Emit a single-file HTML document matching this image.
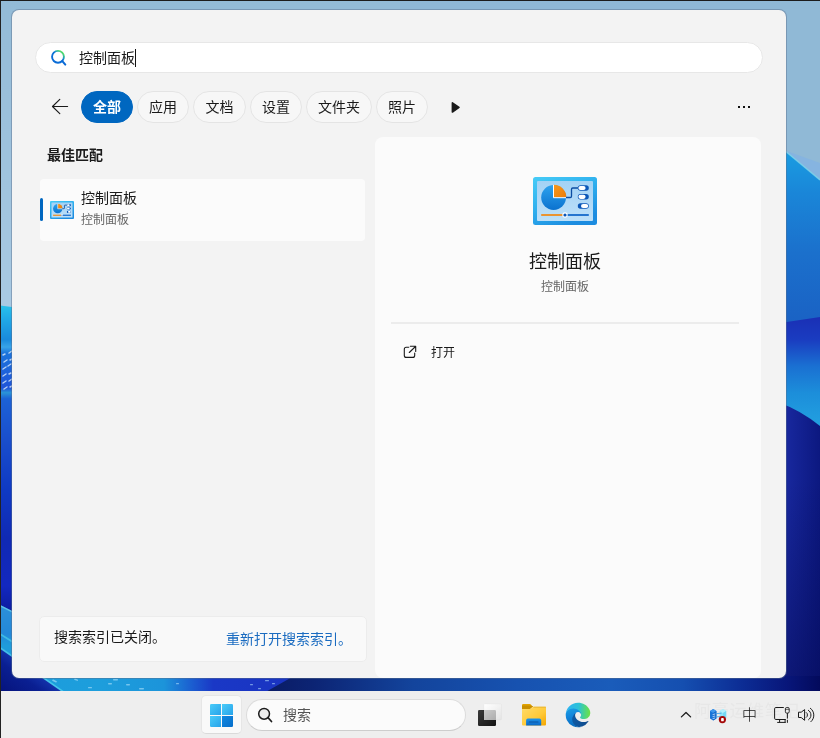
<!DOCTYPE html>
<html lang="zh-CN">
<head>
<meta charset="utf-8">
<title>搜索</title>
<style>
html,body{margin:0;padding:0;}
body{width:820px;height:738px;overflow:hidden;position:relative;background:#93bbd7;font-family:"Liberation Sans","Noto Sans CJK SC",sans-serif;color:#1a1a1a;}
.abs{position:absolute;}
#wall{position:absolute;left:0;top:0;width:820px;height:738px;filter:blur(0.5px);}
#panel{position:absolute;left:12px;top:10px;width:774px;height:668px;background:#f3f3f3;border-radius:7px;box-shadow:0 0 0 1px rgba(90,110,140,.45);}
#sbox{position:absolute;left:35px;top:42px;width:728px;height:31px;background:#fff;border:1px solid #e7e7e7;border-radius:16px;box-sizing:border-box;}
.t{position:absolute;white-space:nowrap;line-height:1;}
.chip{position:absolute;top:91px;height:32px;box-sizing:border-box;border:1px solid #e4e4e4;background:#f7f7f7;border-radius:16px;font-size:14px;line-height:30px;text-align:center;color:#1a1a1a;}
.chip.on{background:#0067c0;border-color:#0067c0;color:#fff;font-weight:bold;}
#item{position:absolute;left:40px;top:179px;width:325px;height:62px;background:#fbfbfb;border-radius:4px;}
#rpane{position:absolute;left:375px;top:137px;width:386px;height:541px;background:#fbfbfb;border-radius:8px 8px 7px 8px;}
#notice{position:absolute;left:39px;top:616px;width:328px;height:46px;box-sizing:border-box;background:#f9f9f9;border:1px solid #ececec;border-radius:5px;}
#taskbar{position:absolute;left:1px;top:691px;width:819px;height:47px;background:#eeeeee;}
#startbg{position:absolute;left:201px;top:695px;width:41px;height:39px;box-sizing:border-box;background:#f9f9f9;border:1px solid #e6e6e6;border-bottom-color:#dadada;border-radius:5px;}
#tsearch{position:absolute;left:246px;top:699px;width:220px;height:32px;box-sizing:border-box;background:#fbfbfb;border:1px solid #dcdcdc;border-bottom-color:#cdcdcd;border-radius:16px;}
</style>
</head>
<body>
<svg id="wall" width="820" height="738" viewBox="0 0 820 738">
<defs>
<linearGradient id="gL1" x1="0" y1="0" x2="0" y2="1"><stop offset="0" stop-color="#93bbd7"/><stop offset="1" stop-color="#a9cae3"/></linearGradient>
<linearGradient id="gL2" gradientUnits="userSpaceOnUse" x1="0" y1="306" x2="0" y2="610"><stop offset="0" stop-color="#28c0ea"/><stop offset="0.045" stop-color="#20a8e6"/><stop offset="0.11" stop-color="#1a8adc"/><stop offset="0.135" stop-color="#38a4e8"/><stop offset="0.155" stop-color="#1c74dc"/><stop offset="0.27" stop-color="#2054d8"/><stop offset="0.285" stop-color="#2a94d8"/><stop offset="0.305" stop-color="#1c62d6"/><stop offset="0.44" stop-color="#1a4ecc"/><stop offset="0.6" stop-color="#0f3ac4"/><stop offset="0.77" stop-color="#1029b4"/><stop offset="0.92" stop-color="#1328c0"/><stop offset="1" stop-color="#0d1ea0"/></linearGradient>
<linearGradient id="gL3" gradientUnits="userSpaceOnUse" x1="0" y1="606" x2="0" y2="700"><stop offset="0" stop-color="#2c90da"/><stop offset="0.3" stop-color="#2388d8"/><stop offset="0.42" stop-color="#1f9cda"/><stop offset="1" stop-color="#1c9cdc"/></linearGradient>
<linearGradient id="gN" gradientUnits="userSpaceOnUse" x1="0" y1="694" x2="26" y2="658"><stop offset="0" stop-color="#05127a"/><stop offset="0.6" stop-color="#0a1f92"/><stop offset="1" stop-color="#183cb8"/></linearGradient>
<linearGradient id="gB" gradientUnits="userSpaceOnUse" x1="0" y1="0" x2="820" y2="0">
<stop offset="0" stop-color="#1c9cdc"/><stop offset="0.12" stop-color="#1d9edc"/><stop offset="0.2" stop-color="#1c94da"/><stop offset="0.235" stop-color="#1b5cd0"/><stop offset="0.26" stop-color="#1a38c6"/><stop offset="0.35" stop-color="#1a34c2"/></linearGradient>
<linearGradient id="gB2" gradientUnits="userSpaceOnUse" x1="270" y1="0" x2="820" y2="0">
<stop offset="0" stop-color="#0a1c66"/><stop offset="0.08" stop-color="#0c2474"/><stop offset="0.26" stop-color="#13449c"/><stop offset="0.45" stop-color="#1752b0"/><stop offset="0.62" stop-color="#1a5cba"/><stop offset="0.75" stop-color="#154fb0"/><stop offset="0.86" stop-color="#0c2c94"/><stop offset="0.94" stop-color="#08167a"/><stop offset="1" stop-color="#030a5c"/></linearGradient>
<linearGradient id="gR1" gradientUnits="userSpaceOnUse" x1="0" y1="150" x2="0" y2="322"><stop offset="0" stop-color="#1a9ee2"/><stop offset="0.25" stop-color="#1a86d8"/><stop offset="0.6" stop-color="#1b70cc"/><stop offset="1" stop-color="#1a62c4"/></linearGradient>
<linearGradient id="gR2" gradientUnits="userSpaceOnUse" x1="0" y1="318" x2="0" y2="425"><stop offset="0" stop-color="#1a30b6"/><stop offset="0.2" stop-color="#1a3cc0"/><stop offset="0.45" stop-color="#1a70d2"/><stop offset="0.7" stop-color="#1c8eda"/><stop offset="1" stop-color="#22a0e0"/></linearGradient>
<linearGradient id="gR3" gradientUnits="userSpaceOnUse" x1="786" y1="0" x2="822" y2="0"><stop offset="0" stop-color="#18289e"/><stop offset="1" stop-color="#0b177e"/></linearGradient>
<linearGradient id="gR4" gradientUnits="userSpaceOnUse" x1="0" y1="480" x2="0" y2="692"><stop offset="0" stop-color="#02064a" stop-opacity="0"/><stop offset="1" stop-color="#02064a" stop-opacity="0.5"/></linearGradient>
</defs>
<rect x="0" y="0" width="820" height="738" fill="#93bbd7"/>
<rect x="400" y="0" width="420" height="160" fill="#8fb8d6"/>
<!-- left strip -->
<rect x="0" y="0" width="16" height="310" fill="url(#gL1)"/>
<polygon points="0,305.5 16,307.5 16,616 0,606" fill="url(#gL2)"/>
<g stroke="#e4f2ff" stroke-width="1.5" stroke-linecap="round" opacity="0.75">
<path d="M3 355l2-1M9 353l3-2M4 362l3-2M10 360l2-1M3 369l3-2M8 366l3-2M3 376l3-2M9 374l2-1M3 383l3-2M9 381l3-2M4 389l3-2M10 387l2-1"/>
</g>
<polygon points="0,605 16,613 16,700 0,700" fill="url(#gL3)"/>
<path d="M0 605.6L16 613.6" stroke="#62cbea" stroke-width="1.5" opacity="0.85"/>
<path d="M0 634L16 644" stroke="#45c6e6" stroke-width="1.8" opacity="0.8"/>
<!-- bottom strip -->
<rect x="10" y="672" width="292" height="20" fill="url(#gB)"/>
<polygon points="0,647 66,694 0,694" fill="url(#gN)"/>
<path d="M0 647.8L66 693.6" stroke="#48cdee" stroke-width="1.7" opacity="0.9"/>
<g fill="#bfeaff" opacity="0.55">
<rect x="52" y="680" width="5" height="1.6" rx="0.8" transform="rotate(25 54 681)"/>
<rect x="74" y="679" width="4" height="1.4" rx="0.7" transform="rotate(20 76 680)"/>
<rect x="108" y="683" width="4" height="1.5" rx="0.7"/>
<rect x="113" y="679" width="5" height="1.5" rx="0.7"/>
<rect x="126" y="684" width="4" height="1.4" rx="0.7"/>
<rect x="139" y="688" width="5" height="1.4" rx="0.7"/>
<rect x="88" y="687" width="4" height="1.3" rx="0.6"/>
<rect x="176" y="683" width="3" height="1.3" rx="0.6"/>
<rect x="250" y="684" width="3" height="1.3" rx="0.6"/>
<rect x="258" y="688" width="3" height="1.3" rx="0.6"/>
<rect x="265" y="680" width="4" height="1.3" rx="0.6"/>
<rect x="272" y="683" width="3" height="1.3" rx="0.6"/>
</g>
<!-- right strip -->
<rect x="780" y="150" width="40" height="175" fill="url(#gR1)"/>
<polygon points="780,0 820,0 820,179 784,150 780,150" fill="#90b9d6"/>
<polygon points="784,150 820,163 820,180" fill="#86b4e0"/>
<path d="M784 150L820 180" stroke="#7fd6ea" stroke-width="1.5" opacity="0.8"/>
<polygon points="780,323 820,317 820,430 780,404" fill="url(#gR2)"/>
<path d="M780 403 Q800 410 820 426 L820 700 L780 700Z" fill="url(#gR3)"/>
<rect x="780" y="480" width="40" height="220" fill="url(#gR4)"/>
<polygon points="294,676 262,694 820,694 820,676" fill="url(#gB2)"/>


</svg>
<div id="panel"></div>
<div id="ui" style="position:absolute;left:0;top:0;width:820px;height:738px;will-change:transform;">
<div id="sbox"></div>
<svg class="abs" style="left:48px;top:46px;" width="22" height="22" viewBox="48 46 22 22">
<defs><linearGradient id="sg" gradientUnits="userSpaceOnUse" x1="53" y1="63" x2="64" y2="50"><stop offset="0" stop-color="#0a6ad6"/><stop offset="0.5" stop-color="#0a70d8"/><stop offset="0.66" stop-color="#28aab4"/><stop offset="0.8" stop-color="#50da6c"/><stop offset="1" stop-color="#5fe060"/></linearGradient></defs>
<circle cx="58" cy="56.8" r="5.95" fill="none" stroke="url(#sg)" stroke-width="1.9"/>
<path d="M62.3 61.1L65.3 64.6" stroke="#0a6ad6" stroke-width="2" stroke-linecap="round"/>
</svg>
<div class="t" style="left:79px;top:51px;font-size:14px;">控制面板</div>
<div class="abs" style="left:135px;top:49px;width:1px;height:18px;background:#111;"></div>

<svg class="abs" style="left:48px;top:95px;" width="24" height="24" viewBox="48 95 24 24">
<path d="M67.6 106.5H52.6M59.8 99.3L52.5 106.5L59.8 113.7" fill="none" stroke="#1a1a1a" stroke-width="1.15" stroke-linecap="round" stroke-linejoin="round"/>
</svg>
<div class="chip on" style="left:81px;width:52px;">全部</div>
<div class="chip" style="left:137px;width:52px;">应用</div>
<div class="chip" style="left:193px;width:53px;">文档</div>
<div class="chip" style="left:250px;width:52px;">设置</div>
<div class="chip" style="left:306px;width:66px;">文件夹</div>
<div class="chip" style="left:376px;width:52px;">照片</div>
<svg class="abs" style="left:446px;top:97px;" width="20" height="20" viewBox="446 97 20 20">
<path d="M452.4 102.9L459 107.4L452.4 112Z" fill="#1a1a1a" stroke="#1a1a1a" stroke-width="1.6" stroke-linejoin="round"/>
</svg>
<svg class="abs" style="left:734px;top:102px;" width="20" height="10" viewBox="734 102 20 10">
<rect x="738" y="106" width="2" height="2" fill="#111"/><rect x="743" y="106" width="2" height="2" fill="#111"/><rect x="748" y="106" width="2" height="2" fill="#111"/>
</svg>

<div class="t" style="left:47px;top:148px;font-size:14px;font-weight:bold;">最佳匹配</div>
<div id="item"></div>
<div class="abs" style="left:40px;top:198px;width:3px;height:23px;background:#0067c0;border-radius:2px;"></div>
<svg class="abs" style="left:50px;top:201px;" width="24" height="18" viewBox="0 0 64 48">
<defs>
<linearGradient id="af" x1="0" y1="0" x2="0.6" y2="1"><stop offset="0" stop-color="#46ccf7"/><stop offset="0.5" stop-color="#2fb0ee"/><stop offset="1" stop-color="#1c8ce0"/></linearGradient>
<linearGradient id="ai" x1="0" y1="0" x2="0" y2="1"><stop offset="0" stop-color="#a3d2f5"/><stop offset="1" stop-color="#bde0f9"/></linearGradient>
<linearGradient id="ap" x1="0" y1="0" x2="0" y2="1"><stop offset="0" stop-color="#2da2ee"/><stop offset="1" stop-color="#0b72cf"/></linearGradient>
<linearGradient id="ao" x1="0" y1="0" x2="1" y2="1"><stop offset="0" stop-color="#f8981d"/><stop offset="1" stop-color="#ea7c08"/></linearGradient>
</defs>
<rect x="0" y="0" width="64" height="48" rx="2.5" fill="url(#af)"/>
<rect x="4" y="4" width="56" height="40" rx="1" fill="url(#ai)"/>
<circle cx="20.6" cy="20.5" r="12.4" fill="url(#ap)"/>
<path d="M20.9 20.2V7.8A12.4 12.4 0 0 1 33.3 20.2Z" fill="url(#ao)"/>
<path d="M20.5 7.9V20.7H33.2" fill="none" stroke="#fff" stroke-width="1.6"/>
<path d="M33 20.5H37.2Q38.5 20.5 38.5 19.2V12.3Q38.5 11 39.8 11H45" fill="none" stroke="#0c4da2" stroke-width="2.2"/>
<rect x="44.8" y="8.3" width="11" height="5.4" rx="2.7" fill="#0b57b8"/><rect x="45.4" y="8.9" width="7.2" height="4.2" rx="2.1" fill="#fff"/>
<rect x="44.8" y="17.1" width="11" height="5.4" rx="2.7" fill="#0b57b8"/><rect x="45.4" y="17.7" width="7.2" height="4.2" rx="2.1" fill="#fff"/>
<rect x="44.8" y="26.3" width="11" height="5.4" rx="2.7" fill="#0b57b8"/><rect x="48" y="26.9" width="7.2" height="4.2" rx="2.1" fill="#fff"/>
<path d="M8.2 38H30" stroke="#f2870f" stroke-width="3"/>
<path d="M34 38H55.8" stroke="#0b63c8" stroke-width="3"/>
<circle cx="32" cy="38" r="2.7" fill="#fff"/><circle cx="32" cy="38" r="1.6" fill="#0b57b8"/>
</svg>
<div class="t" style="left:81px;top:191px;font-size:14px;">控制面板</div>
<div class="t" style="left:81px;top:214px;font-size:12px;color:#666;">控制面板</div>

<div id="rpane"></div>
<svg class="abs" style="left:533px;top:177px;" width="64" height="48" viewBox="0 0 64 48">
<defs>
<linearGradient id="bf" x1="0" y1="0" x2="0.6" y2="1"><stop offset="0" stop-color="#46ccf7"/><stop offset="0.5" stop-color="#2fb0ee"/><stop offset="1" stop-color="#1c8ce0"/></linearGradient>
<linearGradient id="bi" x1="0" y1="0" x2="0" y2="1"><stop offset="0" stop-color="#a3d2f5"/><stop offset="1" stop-color="#bde0f9"/></linearGradient>
<linearGradient id="bp" x1="0" y1="0" x2="0" y2="1"><stop offset="0" stop-color="#2da2ee"/><stop offset="1" stop-color="#0b72cf"/></linearGradient>
<linearGradient id="bo" x1="0" y1="0" x2="1" y2="1"><stop offset="0" stop-color="#f8981d"/><stop offset="1" stop-color="#ea7c08"/></linearGradient>
</defs>
<rect x="0" y="0" width="64" height="48" rx="2.5" fill="url(#bf)"/>
<rect x="4" y="4" width="56" height="40" rx="1" fill="url(#bi)"/>
<circle cx="20.6" cy="20.5" r="12.4" fill="url(#bp)"/>
<path d="M20.9 20.2V7.8A12.4 12.4 0 0 1 33.3 20.2Z" fill="url(#bo)"/>
<path d="M20.5 7.9V20.7H33.2" fill="none" stroke="#fff" stroke-width="1"/>
<path d="M33 20.5H37.2Q38.5 20.5 38.5 19.2V12.3Q38.5 11 39.8 11H45" fill="none" stroke="#0c4da2" stroke-width="1.3"/>
<rect x="44.8" y="8.3" width="11" height="5.4" rx="2.7" fill="#0b57b8"/><rect x="45.4" y="8.9" width="7.2" height="4.2" rx="2.1" fill="#fff"/>
<rect x="44.8" y="17.1" width="11" height="5.4" rx="2.7" fill="#0b57b8"/><rect x="45.4" y="17.7" width="7.2" height="4.2" rx="2.1" fill="#fff"/>
<rect x="44.8" y="26.3" width="11" height="5.4" rx="2.7" fill="#0b57b8"/><rect x="48" y="26.9" width="7.2" height="4.2" rx="2.1" fill="#fff"/>
<path d="M8.2 38H30" stroke="#f2870f" stroke-width="1.7"/>
<path d="M34 38H55.8" stroke="#0b63c8" stroke-width="1.7"/>
<circle cx="32" cy="38" r="2.7" fill="#fff"/><circle cx="32" cy="38" r="1.6" fill="#0b57b8"/>
</svg>
<div class="t" style="left:529px;top:253px;font-size:18px;">控制面板</div>
<div class="t" style="left:541px;top:281px;font-size:12px;color:#666;">控制面板</div>
<div class="abs" style="left:391px;top:322px;width:348px;height:2px;background:#ececec;"></div>
<svg class="abs" style="left:400px;top:342px;" width="20" height="20" viewBox="400 342 20 20">
<path d="M408.7 347.3H406.3Q404.3 347.3 404.3 349.3V355.4Q404.3 357.4 406.3 357.4H412.7Q414.7 357.4 414.7 355.4V353" fill="none" stroke="#1a1a1a" stroke-width="1.1" stroke-linecap="round"/>
<path d="M409.3 352.5L415.5 346.5M410.3 346.3H415.7V351.4" fill="none" stroke="#1a1a1a" stroke-width="1.1" stroke-linecap="round" stroke-linejoin="round"/>
</svg>
<div class="t" style="left:431px;top:347px;font-size:12px;">打开</div>

<div id="notice"></div>
<div class="t" style="left:54px;top:630px;font-size:14px;">搜索索引已关闭。</div>
<div class="t" style="left:226px;top:632px;font-size:14px;color:#1a6bc0;">重新打开搜索索引。</div>

<div id="taskbar"></div>
<div class="abs" style="left:0;top:0;width:1px;height:738px;background:#222;"></div>
<div class="abs" style="left:0;top:0;width:820px;height:1px;background:#1c1c1c;"></div>
<div id="startbg"></div>
<svg class="abs" style="left:210px;top:704px;" width="23" height="23" viewBox="0 0 23 23">
<defs>
<linearGradient id="w1" x1="0" y1="0" x2="1" y2="1"><stop offset="0" stop-color="#4accf9"/><stop offset="1" stop-color="#27a3ea"/></linearGradient>
<linearGradient id="w2" x1="0" y1="0" x2="1" y2="1"><stop offset="0" stop-color="#1088e0"/><stop offset="1" stop-color="#066ecb"/></linearGradient>
</defs>
<path d="M1.2 0H11V11H0V1.2Q0 0 1.2 0Z" fill="url(#w1)"/>
<path d="M12 0H21.8Q23 0 23 1.2V11H12Z" fill="url(#w1)"/>
<path d="M0 12H11V23H1.2Q0 23 0 21.8Z" fill="url(#w1)"/>
<path d="M12 12H23V21.8Q23 23 21.8 23H12Z" fill="url(#w2)"/>
</svg>
<div id="tsearch"></div>
<svg class="abs" style="left:254px;top:704px;" width="22" height="22" viewBox="254 704 22 22">
<circle cx="264.1" cy="713.8" r="5.4" fill="#ededed" stroke="#1c1c1c" stroke-width="1.5"/>
<path d="M268 717.7L271.5 721.5" stroke="#1c1c1c" stroke-width="1.7" stroke-linecap="round"/>
</svg>
<div class="t" style="left:283px;top:708px;font-size:14px;color:#555;">搜索</div>
<svg class="abs" style="left:474px;top:700px;" width="120" height="30" viewBox="474 700 120 30">
<defs>
<linearGradient id="tv1" x1="0" y1="0" x2="1" y2="1"><stop offset="0" stop-color="#3a3a3a"/><stop offset="1" stop-color="#141414"/></linearGradient>
<linearGradient id="tv2" x1="0" y1="0" x2="1" y2="1"><stop offset="0" stop-color="#ffffff"/><stop offset="1" stop-color="#e4e4e4"/></linearGradient>
<linearGradient id="tv3" x1="0" y1="0" x2="1" y2="1"><stop offset="0" stop-color="#cbcbcb"/><stop offset="1" stop-color="#acacac"/></linearGradient>
<linearGradient id="fo1" x1="0" y1="0" x2="1" y2="1"><stop offset="0" stop-color="#ffdc6a"/><stop offset="0.6" stop-color="#ffc938"/><stop offset="1" stop-color="#f4a600"/></linearGradient>
<linearGradient id="fo2" x1="0" y1="0" x2="0" y2="1"><stop offset="0" stop-color="#e8a800"/><stop offset="1" stop-color="#c68c00"/></linearGradient>
<linearGradient id="fo3" x1="0" y1="0" x2="0" y2="1"><stop offset="0" stop-color="#1e94ea"/><stop offset="1" stop-color="#0a68c6"/></linearGradient>
<linearGradient id="eA" gradientUnits="userSpaceOnUse" x1="58" y1="178" x2="237" y2="178"><stop offset="0" stop-color="#0c59a4"/><stop offset="1" stop-color="#114a8b"/></linearGradient>
<linearGradient id="eB" gradientUnits="userSpaceOnUse" x1="60" y1="50" x2="110" y2="250"><stop offset="0" stop-color="#1b9de2"/><stop offset="0.4" stop-color="#1286dc"/><stop offset="1" stop-color="#0669bc"/></linearGradient>
<linearGradient id="eC" gradientUnits="userSpaceOnUse" x1="10" y1="90" x2="250" y2="100"><stop offset="0" stop-color="#2fb4f2"/><stop offset="0.52" stop-color="#2cc2d6"/><stop offset="0.8" stop-color="#4fd67e"/><stop offset="1" stop-color="#6be04a"/></linearGradient>
</defs>
<rect x="478" y="710" width="18" height="16" rx="1.2" fill="url(#tv1)"/>
<rect x="484" y="704" width="17.4" height="16" rx="0.8" fill="url(#tv2)" stroke="#000" stroke-opacity="0.05" stroke-width="0.6"/>
<path d="M484 710H494.8Q496 710 496 711.2V720H484.8Q484 720 484 719.2Z" fill="url(#tv3)"/>
<path d="M522 705.2Q522 704 523.2 704H529.6Q530.4 704 530.9 704.6L532.9 706.9H522Z" fill="url(#fo2)"/>
<path d="M522 706V709.3H530L532.8 706.8V706Z" fill="#c98f00"/>
<path d="M522 709H529.8Q530.4 709 530.9 708.6L532.4 707.2Q532.9 706.8 533.6 706.8H545Q546 706.8 546 707.8V724.4Q546 725.4 545 725.4H523Q522 725.4 522 724.4Z" fill="url(#fo1)"/>
<path d="M533.4 707.2H546" stroke="#e3ae2c" stroke-width="0.8"/>
<path d="M526.1 725.4V720.4Q526.1 718.6 527.9 718.6H539.4Q541.2 718.6 541.2 720.4V725.4Z" fill="url(#fo3)"/>
<path d="M529.3 722H538" stroke="#0a55a4" stroke-width="1.1" stroke-linecap="round"/>
<g transform="translate(565.7 702.7) scale(0.0961)">
<path d="M231 190.500c-3.400 1.800-6.900 3.300-10.500 4.600a101.500 101.500 0 0 1-35.500 6.300c-46.700 0-87.400-32.100-87.400-73.400a31.100 31.100 0 0 1 16.200-27c-42.300 1.800-53.200 45.900-53.200 71.700 0 73 67.300 80.400 81.800 80.400 7.800 0 19.600-2.300 26.700-4.500l1.300-.4a127 127 0 0 0 65.900-52.200 4 4 0 0 0-5.300-5.500z" fill="url(#eA)"/>
<path d="M105.700 241.400a79.200 79.200 0 0 1-22.700-21.300 80.700 80.700 0 0 1 29.500-119.900c3.200-1.500 8.500-4.100 15.600-4a32.400 32.400 0 0 1 25.700 13 31.900 31.900 0 0 1 6.300 18.700c0-.2 24.500-79.600-80-79.600-43.900 0-80 41.600-80 78.200a130.200 130.200 0 0 0 12.100 56 128 128 0 0 0 156.400 67 75.500 75.500 0 0 1-62.800-8z" fill="url(#eB)"/>
<path d="M152.300 148.900c-.9 1-3.400 2.500-3.400 5.600 0 2.600 1.700 5.200 4.800 7.300 14.300 10 41.400 8.600 41.500 8.600a59.600 59.600 0 0 0 30.300-8.300 61.400 61.400 0 0 0 30.400-52.900c.3-22.400-8-37.300-11.300-43.900C223.500 24.900 177.700 0 128 0A128 128 0 0 0 0 126.200c.5-36.500 36.800-66 80-66 3.500 0 23.500.3 42 10a72.600 72.600 0 0 1 30.900 29.300c6.100 10.600 7.200 24.100 7.200 29.500s-2.700 13.300-7.900 20z" fill="url(#eC)"/>
</g>
</svg>
<div class="t" style="left:694px;top:703px;font-size:17px;color:#e7e7e7;letter-spacing:0.7px;">阿豪运维笔记</div>
<svg class="abs" style="left:676px;top:700px;" width="144" height="30" viewBox="676 700 144 30">
<path d="M681.4 716.9L686 712.5L690.6 716.9" fill="none" stroke="#1a1a1a" stroke-width="1.3" stroke-linecap="round" stroke-linejoin="round"/>
<!-- network -->
<path d="M710 711L713.2 708.9L716.4 711V718.4L713.2 720.6L710 718.4Z" fill="#1874d8"/>
<path d="M710 711L713.2 713L716.4 711L713.2 708.9Z" fill="#3f98ec"/>
<path d="M713.2 713V720.6L716.4 718.4V711Z" fill="#166bcc"/>
<path d="M719.7 711L723 708.9L726.2 711V717.5L723 719.6L719.7 717.5Z" fill="#8fe3f8"/>
<path d="M719.7 711L723 713L726.2 711L723 708.9Z" fill="#b4effc"/>
<path d="M723 713V719.6L726.2 717.5V711Z" fill="#74d8f5"/>
<path d="M715.5 713.7L721.5 713.2M715.5 717L720 716.6" stroke="#49a4e4" stroke-width="0.9"/>
<path d="M712.6 714.6L715 714M712.6 716.6L715 716M712.6 718.6L715 718" stroke="#d4e9ff" stroke-width="0.8"/>
<circle cx="722.4" cy="719.6" r="3.6" fill="#a40808"/>
<rect x="721.1" y="717.9" width="2.7" height="3.4" rx="0.9" fill="#fff"/>
<!-- monitor -->
<path d="M783.8 707.5H775.8Q774.6 707.5 774.6 708.7V718.3Q774.6 719.5 775.8 719.5H785.8" fill="none" stroke="#1a1a1a" stroke-width="1"/>
<path d="M779.6 719.5V722.3M785.1 719.5V722.3M777.2 722.4H785.8" fill="none" stroke="#1a1a1a" stroke-width="1"/>
<rect x="785.4" y="707.5" width="3.8" height="5.6" rx="1.3" fill="#eee" stroke="#1a1a1a" stroke-width="0.9"/>
<path d="M785.4 709.3H789.2" stroke="#1a1a1a" stroke-width="0.7"/>
<path d="M787.4 713.1V718.6M787.4 719.8V722.8" stroke="#1a1a1a" stroke-width="1"/>
<!-- speaker -->
<path d="M798.5 712.2H801.2L804.6 709.6V720.3L801.2 717.5H798.5Z" fill="none" stroke="#1a1a1a" stroke-width="1" stroke-linejoin="round"/>
<path d="M806.3 712.5A2.9 2.9 0 0 1 806.3 717.4" fill="none" stroke="#1a1a1a" stroke-width="1" stroke-linecap="round"/>
<path d="M808.4 710.3A5.5 5.5 0 0 1 808.6 719.7" fill="none" stroke="#1a1a1a" stroke-width="1" stroke-linecap="round"/>
<path d="M810.4 708.3A8.4 8.4 0 0 1 810.9 721.7" fill="none" stroke="#1a1a1a" stroke-width="1" stroke-linecap="round"/>
</svg>
<div class="t" style="left:742px;top:707px;font-size:15px;font-weight:300;color:#111;">中</div>
</div>
</body>
</html>
